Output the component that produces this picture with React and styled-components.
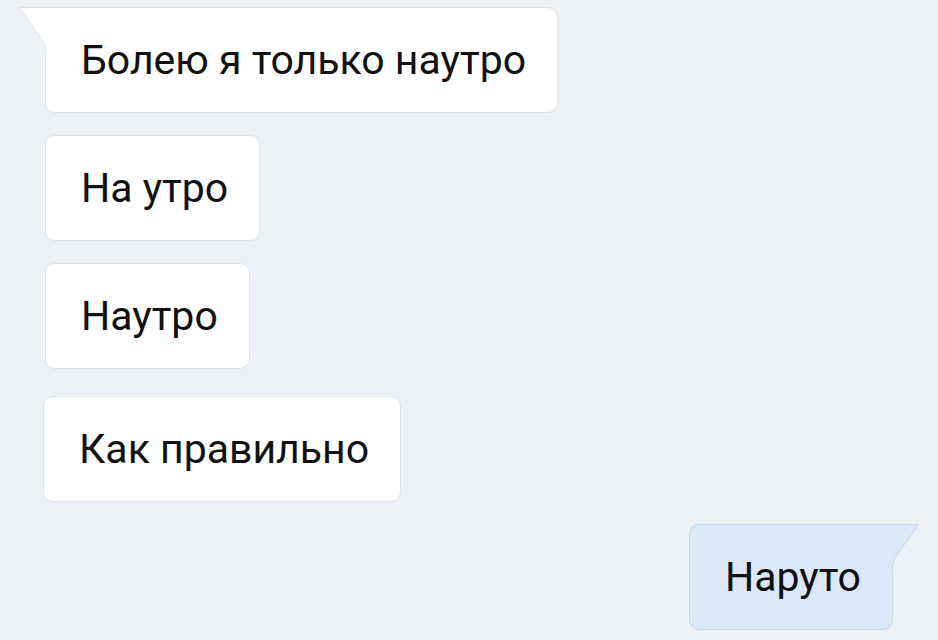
import React from 'react';
import styled, { createGlobalStyle } from 'styled-components';

const GlobalStyle = createGlobalStyle`
  html, body {
    margin: 0;
    padding: 0;
    background: #edf1f6;
  }
  body {
    font-family: Roboto, "Noto Sans", "Liberation Sans", sans-serif;
  }
`;

const Chat = styled.div`
  width: 938px;
  height: 640px;
  overflow: hidden;
  box-sizing: border-box;
  padding: 7px 45px 0 45px;
  display: flex;
  flex-direction: column;
  gap: 22px;
`;

const Bubble = styled.div`
  position: relative;
  align-self: ${p => (p.$out ? 'flex-end' : 'flex-start')};
  margin-top: ${p => p.$extra || 0}px;
  margin-left: ${p => p.$shift || 0}px;
  box-sizing: border-box;
  height: 106px;
  padding: 0 31px 0 35px;
  display: flex;
  align-items: center;
  background: ${p => (p.$out ? '#dbe8f9' : '#ffffff')};
  border: 1px solid ${p => (p.$out ? '#c9d7ea' : '#dfe4ea')};
  border-radius: 10px;
  border-top-left-radius: ${p => (p.$tail && !p.$out ? 0 : 10)}px;
  border-top-right-radius: ${p => (p.$tail && p.$out ? 0 : 10)}px;
  color: #111;
  font-size: 41px;
  line-height: 48px;
  white-space: nowrap;
`;

const Tail = styled.svg`
  position: absolute;
  top: -1px;
  ${p => (p.$out ? 'right: -27px;' : 'left: -27px;')}
  width: 28px;
  height: 46px;
  overflow: visible;
`;

const LeftTail = () => (
  <Tail viewBox="0 0 28 46">
    <path d="M28 0 L2 0 Q0 0 1.3 1.6 L23 32 Q26.5 37 27 46 L28 46 Z" fill="#ffffff" />
    <path d="M28 0.5 L2 0.5 Q0 0.5 1.3 2 L23 32 Q26.5 37 26.8 46" fill="none" stroke="#dfe4ea" strokeWidth="1" />
  </Tail>
);

const RightTail = () => (
  <Tail viewBox="0 0 28 46" $out>
    <path d="M0 0 L26 0 Q28 0 26.7 1.6 L5 32 Q1.5 37 1 46 L0 46 Z" fill="#dbe8f9" />
    <path d="M0 0.5 L26 0.5 Q28 0.5 26.7 2 L5 32 Q1.5 37 1.2 46" fill="none" stroke="#c9d7ea" strokeWidth="1" />
  </Tail>
);

const messages = [
  { text: 'Болею я только наутро', tail: true },
  { text: 'На утро' },
  { text: 'Наутро' },
  { text: 'Как правильно', extra: 5, shift: -2 },
  { text: 'Наруто', out: true, tail: true },
];

export default function App() {
  return (
    <>
      <GlobalStyle />
      <Chat>
        {messages.map((m, i) => (
          <Bubble key={i} $out={m.out} $tail={m.tail} $extra={m.extra} $shift={m.shift}>
            {m.tail && (m.out ? <RightTail /> : <LeftTail />)}
            {m.text}
          </Bubble>
        ))}
      </Chat>
    </>
  );
}
